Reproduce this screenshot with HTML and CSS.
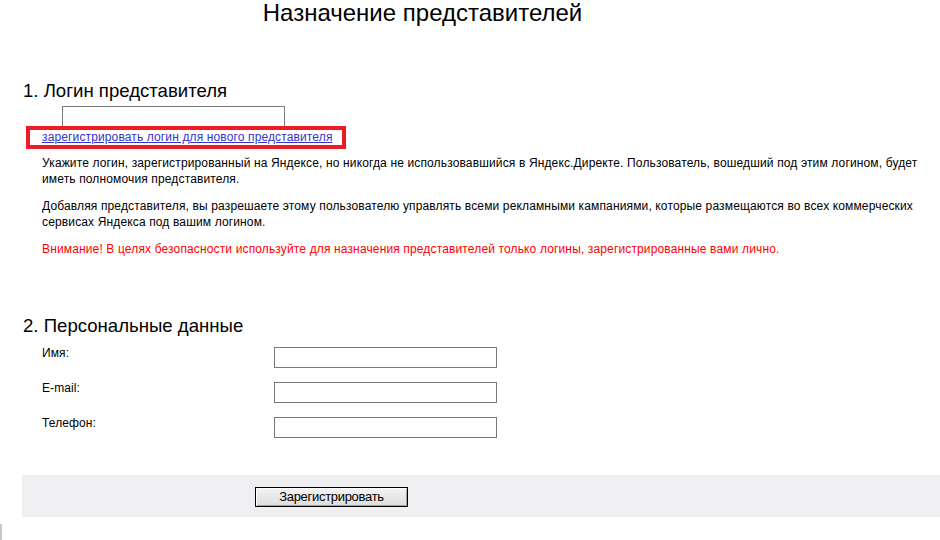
FILE: index.html
```html
<!DOCTYPE html>
<html lang="ru">
<head>
<meta charset="utf-8">
<title>Назначение представителей</title>
<link rel="stylesheet" href="styles.css">
</head>
<body>
<div class="page">
  <h1 class="title">Назначение представителей</h1>

  <section class="sec sec-login">
    <h2 class="sec-head">1. Логин представителя</h2>
    <div class="login-field"></div>
    <div class="hl-box">
      <a class="reg-link" href="#">зарегистрировать логин для нового представителя</a>
    </div>
    <div class="notes">
      <p>Укажите логин, зарегистрированный на Яндексе, но никогда не использовавшийся в Яндекс.Директе. Пользователь, вошедший под этим логином, будет иметь полномочия представителя.</p>
      <p>Добавляя представителя, вы разрешаете этому пользователю управлять всеми рекламными кампаниями, которые размещаются во всех коммерческих сервисах Яндекса под вашим логином.</p>
      <p class="warn">Внимание! В целях безопасности используйте для назначения представителей только логины, зарегистрированные вами лично.</p>
    </div>
  </section>

  <section class="sec sec-personal">
    <h2 class="sec-head">2. Персональные данные</h2>
    <div class="fields">
      <div class="row"><label class="lbl">Имя:</label><input class="inp" type="text"></div>
      <div class="row"><label class="lbl">E-mail:</label><input class="inp" type="text"></div>
      <div class="row"><label class="lbl">Телефон:</label><input class="inp" type="text"></div>
    </div>
  </section>

  <div class="actions">
    <button class="btn" type="button">Зарегистрировать</button>
  </div>
  <div class="edge-mark"></div>
</div>
</body>
</html>
```

FILE: styles.css
```css
html, body {
  margin: 0;
  padding: 0;
  background: #fff;
}
body {
  font-family: "Liberation Sans", Arial, sans-serif;
  font-size: 12px;
  color: #000;
  width: 940px;
  height: 540px;
  overflow: hidden;
}
.page {
  display: flex;
  flex-direction: column;
}
.title {
  margin: 0;
  width: 845px;
  text-align: center;
  font-weight: normal;
  font-size: 24px;
  line-height: 26px;
}
.sec-head {
  margin: 0;
  padding-left: 23px;
  font-weight: normal;
  font-size: 18.6px;
  line-height: 22px;
}
.sec-login .sec-head {
  margin-top: 54px;
}
.login-field {
  margin-left: 62px;
  margin-top: 4px;
  width: 221px;
  height: 19px;
  border: 1px solid #7a7a7a;
  border-bottom: none;
  background: #fff;
}
.hl-box {
  margin-left: 26px;
  width: 300px;
  height: 15px;
  border: 4px solid #ed1c24;
  padding-left: 12px;
  box-sizing: content-box;
}
.reg-link {
  color: #3333cc;
  text-decoration: underline;
  line-height: 15px;
  letter-spacing: 0.13px;
  display: block;
}
.notes {
  padding-left: 42px;
  padding-right: 20px;
  margin-top: 6px;
}
.notes p {
  margin: 0 0 11px 0;
  line-height: 16px;
  letter-spacing: 0.14px;
}
.notes .warn {
  color: #ff0000;
}
.sec-personal .sec-head {
  margin-top: 47px;
}
.fields {
  display: flex;
  flex-direction: column;
  gap: 14px;
  padding-left: 42px;
  margin-top: 10px;
}
.row {
  display: flex;
  align-items: flex-start;
}
.lbl {
  width: 232px;
  line-height: 13px;
  letter-spacing: 0.1px;
}
.inp {
  margin: 0;
  width: 223px;
  height: 21px;
  box-sizing: border-box;
  border: 1px solid #777;
  padding: 0;
  background: #fff;
}
.actions {
  margin-top: 37px;
  margin-left: 22px;
  height: 42px;
  background: #efeff1;
  display: flex;
  align-items: center;
  padding-left: 233px;
}
.btn {
  width: 153px;
  height: 20px;
  box-sizing: border-box;
  border: 1px solid #000;
  background: linear-gradient(#f4f4f4, #dcdcdc);
  box-shadow: inset 1px 1px 0 #fff, inset -1px -1px 0 #a0a0a0;
  font-family: "Liberation Sans", Arial, sans-serif;
  font-size: 13px;
  letter-spacing: -0.3px;
  color: #000;
  padding: 0;
  margin-top: 1px;
}
.edge-mark {
  margin-top: 7px;
  width: 2px;
  height: 16px;
  background: #c8c8c8;
}
```
